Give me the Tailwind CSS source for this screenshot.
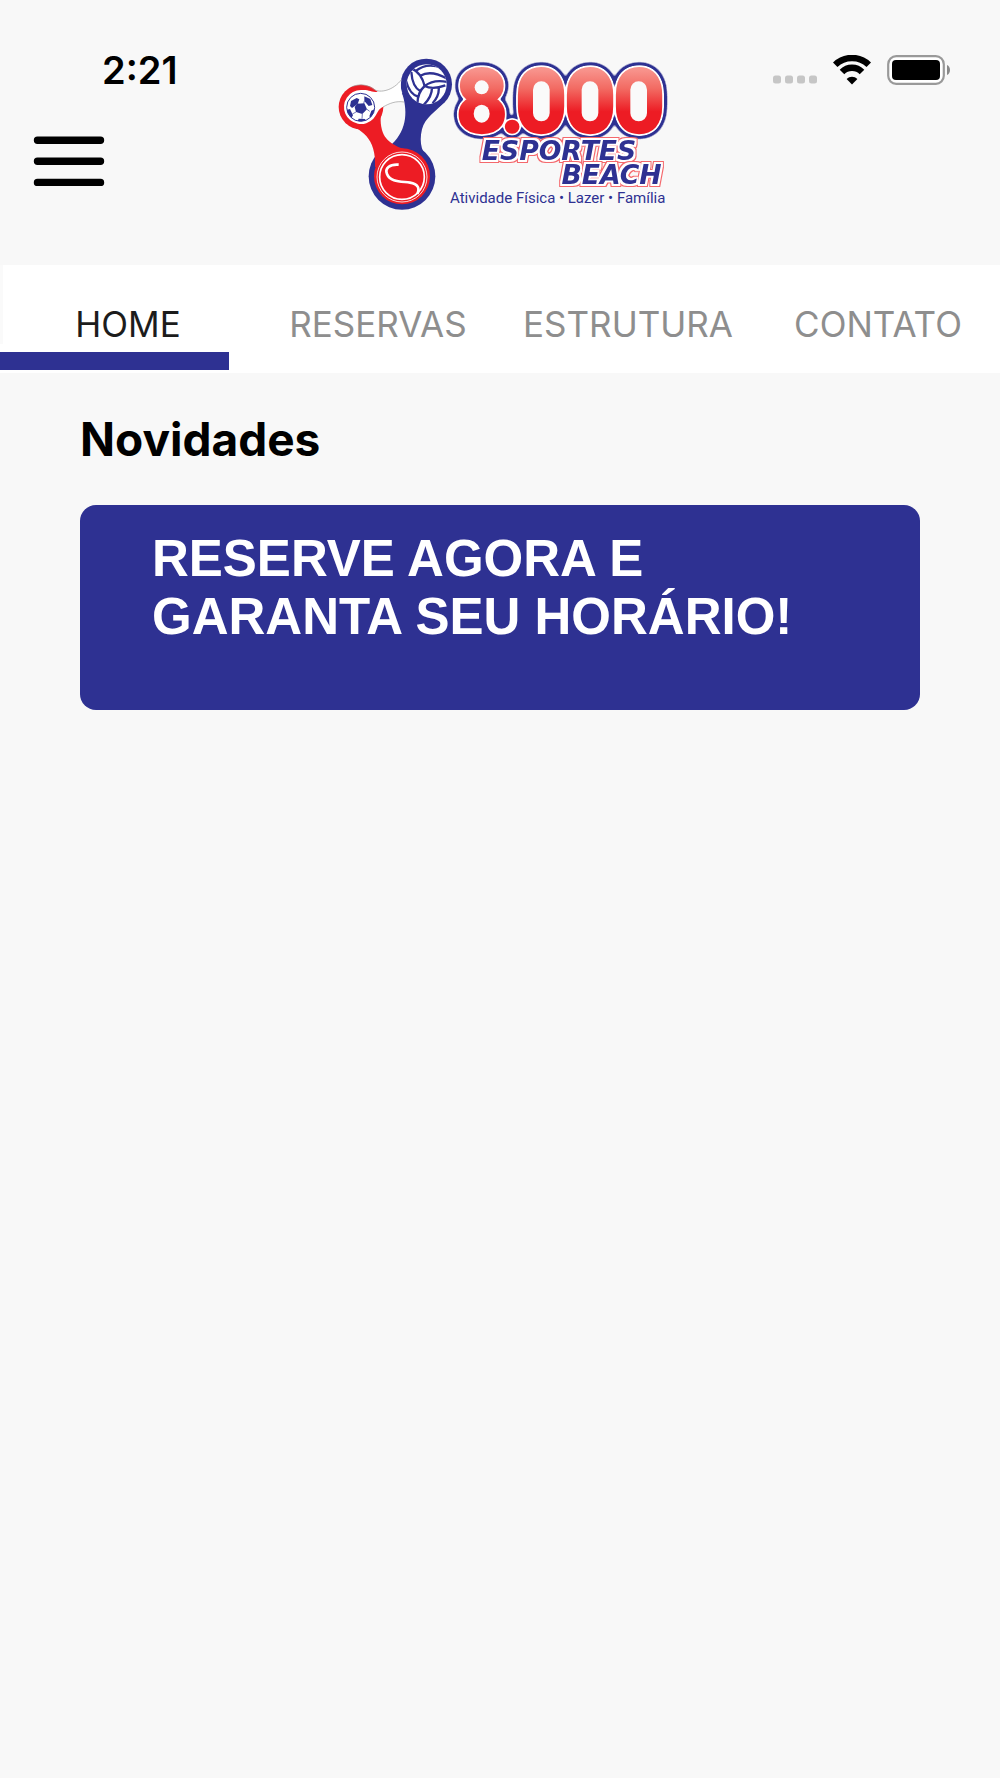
<!DOCTYPE html>
<html lang="pt-BR">
<head>
    <meta charset="UTF-8">
    <meta name="viewport" content="width=device-width, initial-scale=1.0">
    <title>8.000 Esportes Beach</title>
    <script src="https://cdn.jsdelivr.net/npm/@tailwindcss/browser@4"></script>
</head>
<body class="min-h-screen bg-[#f8f8f8] font-['Inter',sans-serif] text-black antialiased">

    <!-- Header: clock and menu, logo, status icons -->
    <header class="grid grid-cols-[1fr_auto_1fr] pt-[50px] pb-[53px]">
        <div class="flex flex-col items-start pl-[33px]">
            <time class="pl-[69px] text-[38px] leading-10 font-semibold">2:21</time>
            <button type="button" aria-label="Menu" class="mt-[46px] cursor-pointer">
                <svg class="h-[50px] w-[72px]" viewBox="0 0 72 50" stroke="#000" stroke-width="7.4" stroke-linecap="round">
                    <path d="M4.5 4.2h63M4.5 25.3h63M4.5 46.4h63" />
                </svg>
            </button>
        </div>

        <a href="#" aria-label="8.000 Esportes Beach">
            <svg class="h-[162px] w-[340px]" viewBox="0 0 1020 486">
                <defs>
                    <linearGradient id="redFade" gradientUnits="userSpaceOnUse" x1="0" y1="60" x2="0" y2="185">
                        <stop offset="0" stop-color="#f8938c" />
                        <stop offset="0.45" stop-color="#f26a62" />
                        <stop offset="1" stop-color="#ed1c24" />
                    </linearGradient>
                    <!-- White then coloured outline around the lettering -->
                    <filter id="blueOutline" x="-10%" y="-15%" width="120%" height="130%" color-interpolation-filters="sRGB">
                        <feGaussianBlur in="SourceAlpha" stdDeviation="9" />
                        <feComponentTransfer result="wide"><feFuncA type="linear" slope="18" intercept="-0.6" /></feComponentTransfer>
                        <feFlood flood-color="#2e3192" />
                        <feComposite in2="wide" operator="in" result="outer" />
                        <feGaussianBlur in="SourceAlpha" stdDeviation="5" />
                        <feComponentTransfer result="narrow"><feFuncA type="linear" slope="9" intercept="-0.6" /></feComponentTransfer>
                        <feFlood flood-color="#fff" />
                        <feComposite in2="narrow" operator="in" result="inner" />
                        <feMerge>
                            <feMergeNode in="outer" />
                            <feMergeNode in="inner" />
                            <feMergeNode in="SourceGraphic" />
                        </feMerge>
                    </filter>
                    <filter id="redOutline" x="-10%" y="-25%" width="120%" height="150%" color-interpolation-filters="sRGB">
                        <feMorphology in="SourceAlpha" operator="dilate" radius="8" result="wide" />
                        <feFlood flood-color="#f4686c" />
                        <feComposite in2="wide" operator="in" result="outer" />
                        <feMorphology in="SourceAlpha" operator="dilate" radius="5" result="narrow" />
                        <feFlood flood-color="#fff" />
                        <feComposite in2="narrow" operator="in" result="inner" />
                        <feMerge>
                            <feMergeNode in="outer" />
                            <feMergeNode in="inner" />
                            <feMergeNode in="SourceGraphic" />
                        </feMerge>
                    </filter>
                    <clipPath id="volleyClip"><circle cx="290" cy="103" r="60" /></clipPath>
                    <clipPath id="soccerClip"><circle cx="92" cy="172" r="42" /></clipPath>
                </defs>

                <!-- Blue arm with top and bottom discs -->
                <g fill="#2e3192">
                    <circle cx="289" cy="103" r="77" />
                    <circle cx="216" cy="379" r="100" />
                    <path d="M216 128C232 178 234 236 186 282L190 340H304C276 312 266 280 276 238C286 202 316 186 346 154Z" />
                </g>
                <!-- Red arm with left and bottom discs -->
                <g fill="#ed1c24">
                    <circle cx="93" cy="171" r="67" />
                    <circle cx="216" cy="379" r="84" />
                    <path d="M46 219C92 238 140 262 135 352L250 303C206 296 166 278 156 240C149 212 152 192 159 168Z" />
                </g>
                <!-- White arm -->
                <path d="M93 120C120 118 122 128 150 126C184 122 200 106 214 90C210 116 213 134 222 155C196 152 178 160 160 170C142 178 144 190 130 206A51 51 0 1 1 93 120Z" fill="#fff" />
                <path d="M66 110C88 101 112 103 132 118C150 130 190 122 215 88M159 171C178 160 198 152 222 156" fill="none" stroke="#999" stroke-width="2" />

                <!-- Soccer ball -->
                <circle cx="92" cy="172" r="42" fill="#fff" stroke="#2e3192" stroke-width="3" />
                <g clip-path="url(#soccerClip)" fill="#2e3192">
                    <path d="M82 161l21-1 8 18-14 14-19-6-4-15Z" />
                    <path d="M63 153l17-9 8 4-5 14-17 12-6-6ZM103 139l18 8 6 18-11 3-13-15ZM49 180l11-3 9 19-5 9-10-7ZM86 206l20 1-2 9H82ZM137 176l-13 6-6 17 7 8 13-14Z" />
                    <path d="M103 153l-2 8M86 162l-10 7M111 178l8 6M97 192l-1 14M78 186l-11 6" fill="none" stroke="#2e3192" stroke-width="2" />
                </g>

                <!-- Volleyball -->
                <circle cx="290" cy="103" r="60" fill="#fff" />
                <g clip-path="url(#volleyClip)" fill="none" stroke="#2e3192" stroke-width="7">
                    <path d="M284 108C278 84 268 66 246 56M271 77C290 66 316 66 352 86M257 63C278 46 306 42 336 54M284 108C302 94 324 90 352 96" />
                    <path d="M284 108C300 116 318 116 346 106M306 113C306 130 298 148 280 166M326 112C328 128 322 144 308 160" />
                    <path d="M284 108C270 120 262 136 262 164M272 124C256 116 246 98 244 66M264 140C246 134 234 116 228 92" />
                </g>

                <!-- Tennis ball -->
                <g fill="none" stroke="#fff">
                    <circle cx="216" cy="381" r="75" stroke-width="2.5" />
                    <circle cx="216" cy="381" r="67" stroke-width="5" />
                    <path d="M206 344C178 342 164 356 171 372C180 396 214 394 240 398C264 402 270 414 262 432" stroke-width="8" />
                </g>

                <!-- Wordmark -->
                <text y="243" filter="url(#blueOutline)" font-family="Roboto, sans-serif" font-weight="900" font-size="254" text-anchor="middle" fill="url(#redFade)" stroke="url(#redFade)" stroke-width="13" stroke-linejoin="round"><tspan x="455">8</tspan><tspan x="547" font-size="170">.</tspan><tspan x="780">000</tspan></text>
                <g fill="#fafafa">
                    <ellipse cx="455" cy="112" rx="21" ry="21" />
                    <ellipse cx="455" cy="191" rx="24" ry="27" />
                    <rect x="609" y="94" width="50" height="120" rx="25" />
                    <rect x="755" y="94" width="50" height="120" rx="25" />
                    <rect x="901" y="94" width="50" height="120" rx="25" />
                </g>
                <g font-family="'DejaVu Sans', sans-serif" font-weight="700" font-style="italic" font-size="80" fill="#2e3192">
                    <text x="687" y="330" text-anchor="middle" filter="url(#redOutline)">ESPORTES</text>
                    <text x="995" y="402" text-anchor="end" filter="url(#redOutline)">BEACH</text>
                </g>
                <text x="360" y="458" font-family="Roboto, sans-serif" font-size="45" fill="#2e3192">Atividade Física • Lazer • Família</text>
            </svg>
        </a>

        <div class="flex h-[35px] items-end justify-end pr-[49px]">
            <svg class="mb-px h-[9px] w-[45px]" viewBox="0 0 45 9" fill="#c6c6c6">
                <rect x="0" y="0.5" width="8" height="8" rx="2.5" />
                <rect x="12" y="0.5" width="8" height="8" rx="2.5" />
                <rect x="24" y="0.5" width="8" height="8" rx="2.5" />
                <rect x="36" y="0.5" width="8" height="8" rx="2.5" />
            </svg>
            <svg class="ml-[15px] h-[30px] w-[38px]" viewBox="0 0 38 30">
                <path d="M2.2 9.8a24 24 0 0 1 33.6 0M9 17a14 14 0 0 1 20 0" fill="none" stroke="#000" stroke-width="6.4" />
                <path d="M19 29.5l-5.4-5.6a7.8 7.8 0 0 1 10.8 0Z" />
            </svg>
            <svg class="ml-4 h-[30px] w-[64px]" viewBox="0 0 64 30">
                <rect x="1.2" y="1.2" width="55.6" height="27.6" rx="8" fill="#fff" stroke="#999" stroke-width="2.2" />
                <rect x="5" y="5" width="48" height="20" rx="4" />
                <path d="M60 10c4 1.6 4 8.4 0 10Z" fill="#888" />
            </svg>
        </div>
    </header>

    <!-- Tabs -->
    <nav class="overflow-hidden bg-white pb-[3px]">
        <ul class="-mr-[3px] grid grid-cols-4 border-l-[3px] border-[#fafafa] pt-[39px] text-center text-[35px] leading-10 text-[#8e8e8e]">
            <li><a href="#home" aria-current="page" class="text-[#1c1c1c]">HOME</a></li>
            <li><a href="#reservas">RESERVAS</a></li>
            <li><a href="#estrutura">ESTRUTURA</a></li>
            <li><a href="#contato">CONTATO</a></li>
        </ul>
        <div class="mt-2 h-[18px] w-[229px] bg-[#2e3192]"></div>
    </nav>

    <!-- News -->
    <main class="px-20 pt-[38px]">
        <h1 class="text-[46px] leading-14 font-bold">Novidades</h1>
        <a href="#reservas" class="mt-[38px] block rounded-2xl bg-[#2e3192] px-[72px] pt-[25px] pb-16 font-['Liberation_Sans',Arial,sans-serif] text-[51px] leading-[58px] font-bold text-white">
            RESERVE AGORA E GARANTA SEU HORÁRIO!
        </a>
    </main>

</body>
</html>
